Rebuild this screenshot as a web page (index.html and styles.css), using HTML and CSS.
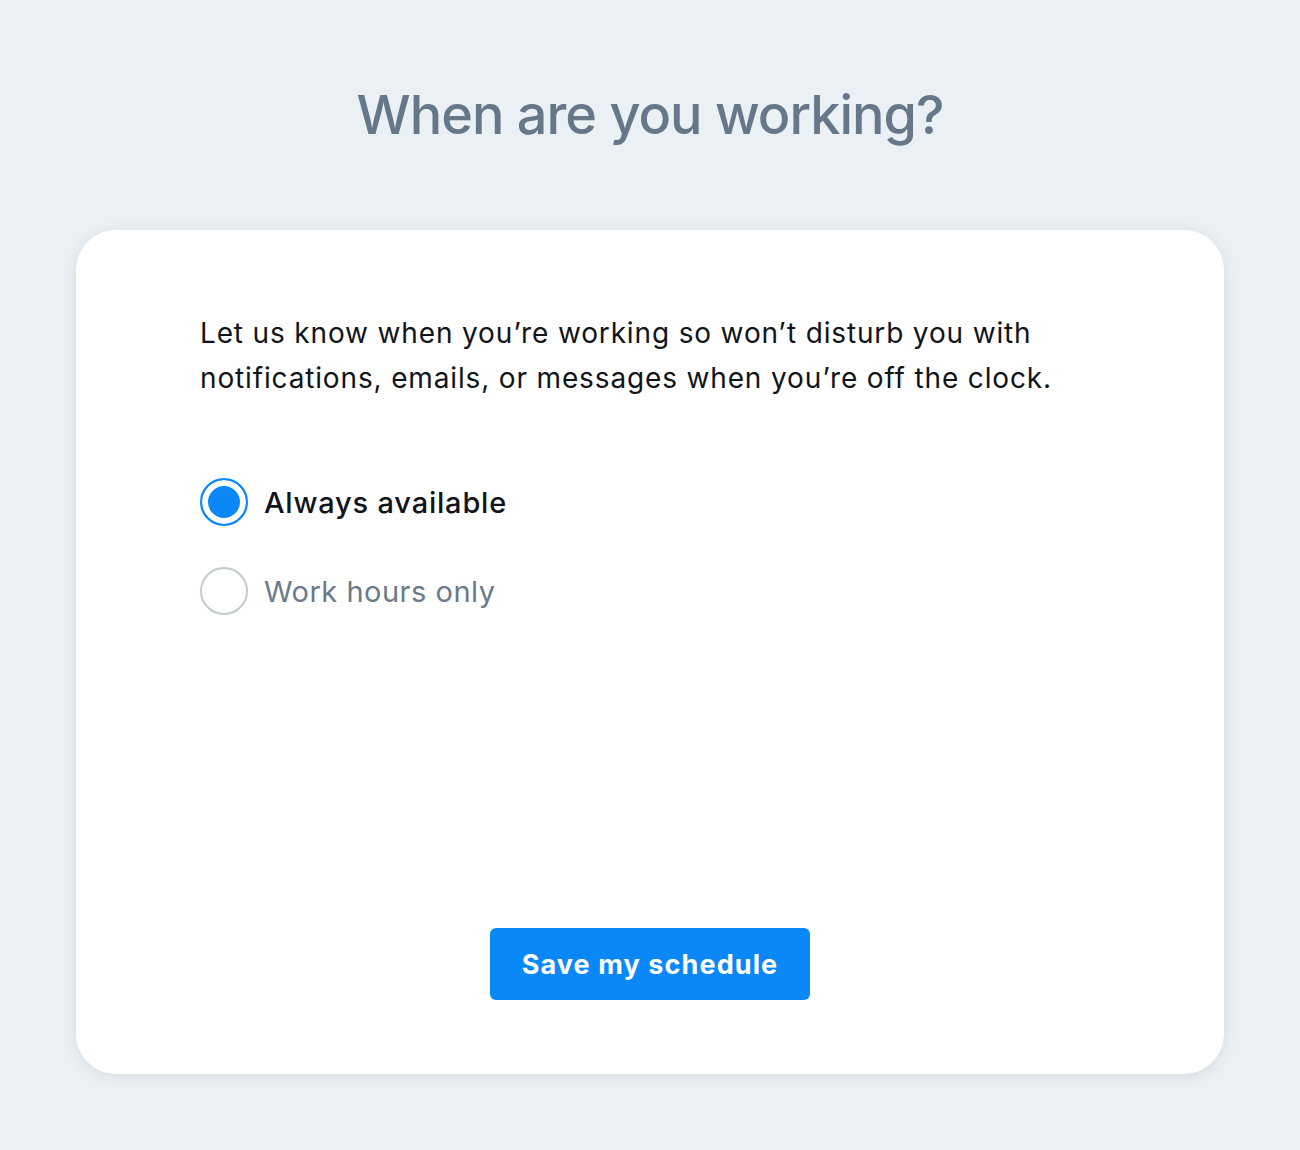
FILE: index.html
```html
<!DOCTYPE html>
<html lang="en">
<head>
    <meta charset="UTF-8">
    <title>When are you working?</title>
    <link rel="stylesheet" href="styles.css">
</head>
<body>
    <h1 class="page-title">When are you working?</h1>
    <div class="schedule-card">
        <p class="schedule-intro">Let us know when you’re working so won’t disturb you with notifications, emails, or messages when you’re off the clock.</p>
        <div class="radio-list">
            <label class="radio-row is-checked">
                <span class="radio-dot"></span>
                <span class="radio-label">Always available</span>
            </label>
            <label class="radio-row">
                <span class="radio-dot"></span>
                <span class="radio-label">Work hours only</span>
            </label>
        </div>
        <div class="card-actions">
            <button class="save-btn" type="button">Save my schedule</button>
        </div>
    </div>
</body>
</html>
```

FILE: styles.css
```css
html,
body {
    margin: 0;
    padding: 0;
}
body {
    min-height: 1150px;
    background-color: #ebf0f4;
    font-family: Inter, "Noto Sans", sans-serif;
    display: flex;
    flex-direction: column;
    align-items: center;
}
.page-title {
    margin: 79px 0 79px;
    font-size: 54px;
    line-height: 72px;
    font-weight: 500;
    letter-spacing: -1px;
    color: #66778a;
}
.schedule-card {
    box-sizing: border-box;
    width: 1148px;
    height: 844px;
    padding: 81px 124px 74px;
    background-color: #ffffff;
    border-radius: 40px;
    box-shadow: 0 2px 14px rgba(60, 80, 100, .12);
    display: flex;
    flex-direction: column;
}
.schedule-intro {
    margin: 0;
    font-size: 28px;
    line-height: 45px;
    letter-spacing: .85px;
    color: #111418;
}
.radio-list {
    margin-top: 77px;
    display: flex;
    flex-direction: column;
    gap: 41px;
}
.radio-row {
    display: flex;
    align-items: center;
    gap: 16px;
    height: 48px;
}
.radio-dot {
    box-sizing: border-box;
    width: 48px;
    height: 48px;
    border-radius: 50%;
    border: 2px solid #c3cad1;
    background-color: #ffffff;
    flex: none;
}
.is-checked .radio-dot {
    border-color: #0a88f8;
    box-shadow: inset 0 0 0 6px #ffffff;
    background-color: #0a88f8;
}
.radio-label {
    font-size: 29px;
    letter-spacing: .5px;
    color: #6a7a8a;
}
.is-checked .radio-label {
    font-weight: 500;
    letter-spacing: .8px;
    color: #111418;
}
.card-actions {
    margin-top: auto;
    display: flex;
    justify-content: center;
}
.save-btn {
    width: 320px;
    height: 72px;
    border: 0;
    border-radius: 6px;
    background-color: #0a88f8;
    color: #ffffff;
    font-family: Inter, "Noto Sans", sans-serif;
    font-size: 27px;
    font-weight: 700;
    letter-spacing: 1.1px;
}
```
